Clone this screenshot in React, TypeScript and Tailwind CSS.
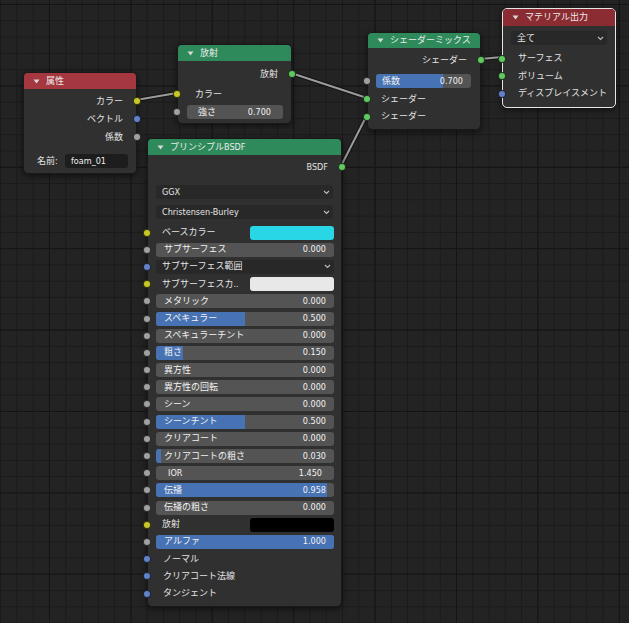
import type { ReactNode } from "react";

type Kind = "y" | "g" | "b" | "s";

const sockColor: Record<Kind, string> = {
  y: "bg-[#c7c729]",
  g: "bg-[#a1a1a1]",
  b: "bg-[#6381c7]",
  s: "bg-[#63c763]",
};

function Socket({ kind, side }: { kind: Kind; side: "l" | "r" }) {
  const pos = side === "l" ? "left-[-5px]" : "right-[-5px]";
  return <span className={`absolute top-1/2 h-[8px] w-[8px] -translate-y-1/2 rounded-full border border-black/70 ${pos} ${sockColor[kind]}`} />;
}

function Tri() {
  return (
    <svg width="7" height="5" viewBox="0 0 7 5" className="shrink-0">
      <path d="M0.5 0.5 H6.5 L3.5 4.5 Z" fill="#d8d8d8" />
    </svg>
  );
}

function Chevron() {
  return (
    <svg width="7" height="5" viewBox="0 0 7 5" className="shrink-0">
      <polyline points="1,1 3.5,3.5 6,1" fill="none" stroke="#bdbdbd" strokeWidth="1.1" />
    </svg>
  );
}

function Node(props: { className: string; header: string; title: string; active?: boolean; children: ReactNode }) {
  const { className, header, title, active, children } = props;
  return (
    <div
      className={`absolute rounded-[5px] border bg-[#303030] shadow-[0_2px_6px_rgba(0,0,0,0.55)] ${active ? "border-[#e6e6e6]" : "border-[#191919]"} ${className}`}
    >
      <div className={`flex items-center gap-[6px] rounded-t-[4px] pl-[9px] text-[#ececec] ${header}`}>
        <Tri />
        <span>{title}</span>
      </div>
      {children}
    </div>
  );
}

function OutRow({ label, kind, className }: { label: string; kind: Kind; className: string }) {
  return (
    <div className={`relative flex items-center justify-end pr-[13px] ${className}`}>
      {label}
      <Socket kind={kind} side="r" />
    </div>
  );
}

function InRow({ label, kind, className, pad = "pl-[15px]" }: { label: string; kind: Kind; className: string; pad?: string }) {
  return (
    <div className={`relative flex items-center ${pad} ${className}`}>
      {label}
      <Socket kind={kind} side="l" />
    </div>
  );
}

function Slider(props: { label: string; value: string; fill?: number; className?: string; lpad?: string; rpad?: string }) {
  const { label, value, fill = 0, className = "", lpad = "pl-[8px]", rpad = "pr-[8px]" } = props;
  return (
    <div className={`relative flex h-[14px] items-center justify-between overflow-hidden rounded-[3px] bg-[#545454] text-[#f2f2f2] ${className}`}>
      {fill > 0 ? <div className="absolute inset-y-0 left-0 bg-[#4772b3]" style={{ width: `${fill * 100}%` }} /> : null}
      <span className={`relative ${lpad}`}>{label}</span>
      <span className={`relative ${rpad}`}>{value}</span>
    </div>
  );
}

function Dropdown({ label, className = "" }: { label: string; className?: string }) {
  return (
    <div className={`flex h-[14px] items-center justify-between rounded-[3px] bg-[#282828] pl-[6px] pr-[3px] text-[#e6e6e6] ${className}`}>
      <span>{label}</span>
      <Chevron />
    </div>
  );
}

type BsdfRow =
  | { t: "slider"; label: string; value: string; fill?: number; kind: Kind; ior?: boolean }
  | { t: "color"; label: string; swatch: string; kind: Kind }
  | { t: "drop"; label: string; kind: Kind }
  | { t: "plain"; label: string; kind: Kind };

const bsdfRows: BsdfRow[] = [
  { t: "color", label: "ベースカラー", swatch: "bg-[#29d6e6]", kind: "y" },
  { t: "slider", label: "サブサーフェス", value: "0.000", kind: "g" },
  { t: "drop", label: "サブサーフェス範囲", kind: "b" },
  { t: "color", label: "サブサーフェスカ..", swatch: "bg-[#e8e8e8]", kind: "y" },
  { t: "slider", label: "メタリック", value: "0.000", kind: "g" },
  { t: "slider", label: "スペキュラー", value: "0.500", fill: 0.5, kind: "g" },
  { t: "slider", label: "スペキュラーチント", value: "0.000", kind: "g" },
  { t: "slider", label: "粗さ", value: "0.150", fill: 0.15, kind: "g" },
  { t: "slider", label: "異方性", value: "0.000", kind: "g" },
  { t: "slider", label: "異方性の回転", value: "0.000", kind: "g" },
  { t: "slider", label: "シーン", value: "0.000", kind: "g" },
  { t: "slider", label: "シーンチント", value: "0.500", fill: 0.5, kind: "g" },
  { t: "slider", label: "クリアコート", value: "0.000", kind: "g" },
  { t: "slider", label: "クリアコートの粗さ", value: "0.030", fill: 0.03, kind: "g" },
  { t: "slider", label: "IOR", value: "1.450", kind: "g", ior: true },
  { t: "slider", label: "伝播", value: "0.958", fill: 0.958, kind: "g" },
  { t: "slider", label: "伝播の粗さ", value: "0.000", kind: "g" },
  { t: "color", label: "放射", swatch: "bg-[#000000]", kind: "y" },
  { t: "slider", label: "アルファ", value: "1.000", fill: 1, kind: "g" },
  { t: "plain", label: "ノーマル", kind: "b" },
  { t: "plain", label: "クリアコート法線", kind: "b" },
  { t: "plain", label: "タンジェント", kind: "b" },
];

function BsdfLine({ row }: { row: BsdfRow }) {
  return (
    <div className="relative flex h-[17.2px] items-center pl-[8px] pr-[7px]">
      <Socket kind={row.kind} side="l" />
      {row.t === "slider" ? (
        <Slider
          className="w-full"
          label={row.label}
          value={row.value}
          fill={row.fill}
          lpad={row.ior ? "pl-[12px]" : "pl-[8px]"}
          rpad={row.ior ? "pr-[12px]" : "pr-[8px]"}
        />
      ) : null}
      {row.t === "drop" ? <Dropdown className="w-full" label={row.label} /> : null}
      {row.t === "color" ? (
        <div className="flex w-full items-center justify-between">
          <span className="pl-[6px]">{row.label}</span>
          <span className={`h-[14px] w-[84px] rounded-[3px] ${row.swatch}`} />
        </div>
      ) : null}
      {row.t === "plain" ? <span className="pl-[7px]">{row.label}</span> : null}
    </div>
  );
}

// editor background grid: minor lines every 16.28px, darker major lines every 5
function Grid() {
  return (
    <svg className="pointer-events-none absolute inset-0" width="629" height="623">
      <defs>
        <pattern id="minor" x="49" y="4" width="16.28" height="16.28" patternUnits="userSpaceOnUse">
          <rect x="0" y="0" width="1" height="16.28" fill="#1a1a1a" />
          <rect x="0" y="0" width="16.28" height="1" fill="#1a1a1a" />
        </pattern>
        <pattern id="major" x="49" y="4" width="81.4" height="81.4" patternUnits="userSpaceOnUse">
          <rect x="0" y="0" width="1" height="81.4" fill="#141414" />
          <rect x="0" y="0" width="81.4" height="1" fill="#141414" />
        </pattern>
      </defs>
      <rect width="629" height="623" fill="url(#minor)" />
      <rect width="629" height="623" fill="url(#major)" />
    </svg>
  );
}

function Wires() {
  const lines: [number, number, number, number][] = [
    [136, 100, 177, 93],
    [291, 73, 367, 98],
    [341, 166, 367, 115],
    [480, 59, 502, 57],
  ];
  return (
    <svg className="pointer-events-none absolute inset-0" width="629" height="623">
      {lines.map(([x1, y1, x2, y2], i) => (
        <g key={i}>
          <line x1={x1} y1={y1} x2={x2} y2={y2} stroke="#000" strokeOpacity="0.45" strokeWidth="4" />
          <line x1={x1} y1={y1} x2={x2} y2={y2} stroke="#9c9c9c" strokeWidth="2" />
        </g>
      ))}
    </svg>
  );
}

export default function App() {
  return (
    <div className="relative h-[623px] w-[629px] overflow-hidden bg-[#232323] font-['DejaVu_Sans_Condensed','DejaVu_Sans','Noto_Sans_CJK_JP',sans-serif] text-[9px] leading-none text-[#e4e4e4]">
      <Grid />
      <Wires />

      <Node className="left-[23px] top-[72px] w-[114px]" header="h-[16px] bg-[#a4373f]" title="属性">
        <div className="pt-[3px] pb-[5px]">
          <OutRow label="カラー" kind="y" className="h-[18px]" />
          <OutRow label="ベクトル" kind="b" className="h-[18px]" />
          <OutRow label="係数" kind="g" className="h-[18px]" />
          <div className="mt-[8px] flex h-[14px] items-center pl-[13px] pr-[8px]">
            <span className="w-[28px] shrink-0">名前:</span>
            <div className="flex h-full flex-1 items-center rounded-[3px] bg-[#1d1d1d] pl-[6px] text-[#eeeeee]">foam_01</div>
          </div>
        </div>
      </Node>

      <Node className="left-[177px] top-[44px] w-[115px]" header="h-[16px] bg-[#2e8a5b]" title="放射">
        <div className="pt-[4px] pb-[4px]">
          <OutRow label="放射" kind="s" className="h-[18px]" />
          <InRow label="カラー" kind="y" className="mt-[2px] h-[18px]" pad="pl-[17px]" />
          <div className="relative mt-[2px] pl-[9px] pr-[8px]">
            <Socket kind="g" side="l" />
            <Slider label="強さ" value="0.700" lpad="pl-[11px]" rpad="pr-[12px]" />
          </div>
        </div>
      </Node>

      <Node className="left-[367px] top-[32px] w-[114px]" header="h-[15px] bg-[#2e8a5b]" title="シェーダーミックス">
        <div className="pt-[3px] pb-[4px]">
          <OutRow label="シェーダー" kind="s" className="h-[18px]" />
          <div className="relative mt-[5px] pl-[8px] pr-[9px]">
            <Socket kind="g" side="l" />
            <Slider label="係数" value="0.700" fill={0.7} lpad="pl-[6px]" rpad="pr-[8px]" />
          </div>
          <InRow label="シェーダー" kind="s" className="mt-[2px] h-[18px]" pad="pl-[13px]" />
          <InRow label="シェーダー" kind="s" className="h-[17px]" pad="pl-[13px]" />
        </div>
      </Node>

      <Node className="left-[502px] top-[8px] w-[114px]" header="h-[17px] bg-[#8b2b32]" title="マテリアル出力" active>
        <div className="pt-[5px] pb-[4px]">
          <div className="pl-[8px] pr-[8px]">
            <Dropdown label="全て" className="h-[13px]" />
          </div>
          <div className="mt-[5px]">
            <InRow label="サーフェス" kind="s" className="h-[17.5px]" />
            <InRow label="ボリューム" kind="s" className="h-[17.5px]" />
            <InRow label="ディスプレイスメント" kind="b" className="h-[17.5px]" />
          </div>
        </div>
      </Node>

      <Node className="left-[147px] top-[138px] w-[195px]" header="h-[16px] bg-[#2e8a5b]" title="プリンシプルBSDF">
        <div className="pt-[3px] pb-[4px]">
          <OutRow label="BSDF" kind="s" className="h-[18px]" />
          <div className="mt-[9px] px-[8px]">
            <Dropdown label="GGX" />
          </div>
          <div className="mt-[6px] px-[8px]">
            <Dropdown label="Christensen-Burley" />
          </div>
          <div className="mt-[5px]">
            {bsdfRows.map((row) => (
              <BsdfLine key={row.label} row={row} />
            ))}
          </div>
        </div>
      </Node>
    </div>
  );
}
